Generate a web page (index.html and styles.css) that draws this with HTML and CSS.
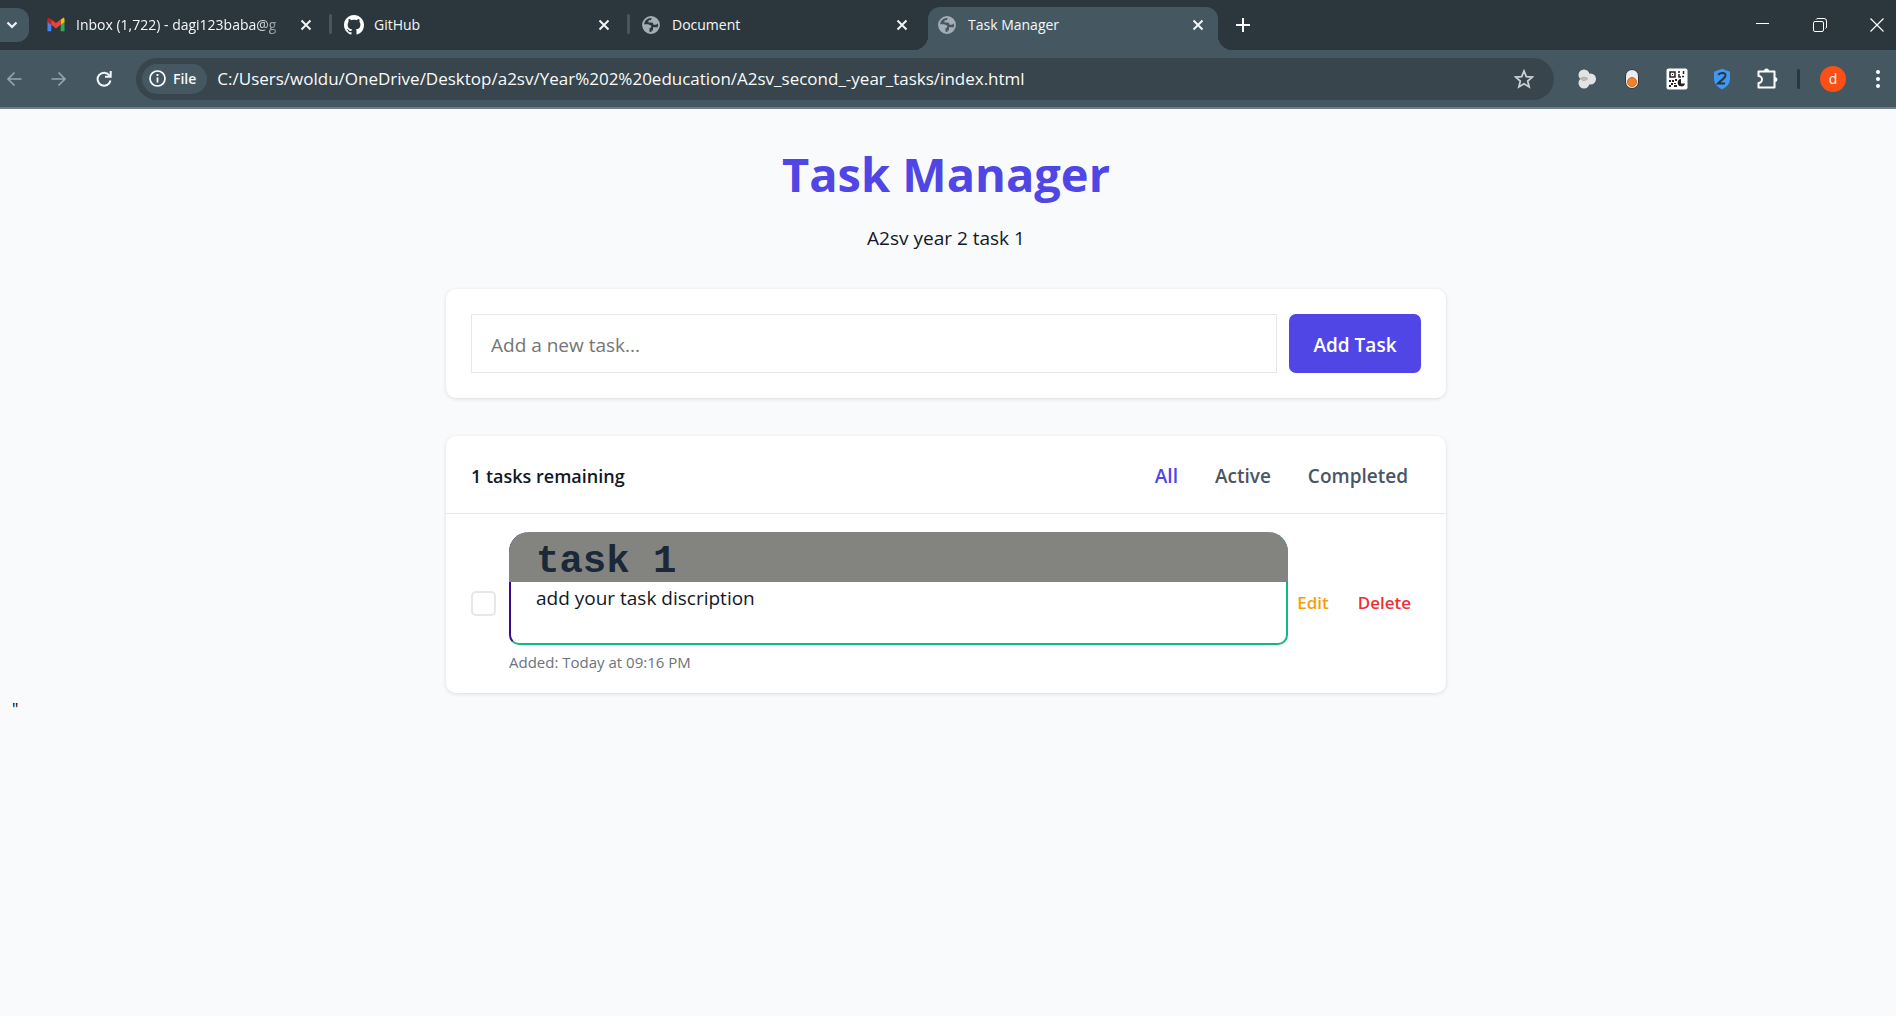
FILE: index.html
```html
<!DOCTYPE html>
<html lang="en">
<head>
<meta charset="utf-8">
<title>Task Manager</title>
<link rel="stylesheet" href="styles.css">
</head>
<body>
<svg class="defs" width="0" height="0" aria-hidden="true">
  <symbol id="close" viewBox="0 0 12 12"><path d="M1.5 1.5l9 9m0-9l-9 9" fill="none" stroke="currentColor" stroke-width="1.9"/></symbol>
  <symbol id="globe" viewBox="0 0 18 18"><circle cx="9" cy="9" r="8" fill="none" stroke="#a3adb5" stroke-width="1.800"/><path d="M9 1C10 2 10 3 8.500 4.200H6.500v2.300H9.500c1.500 0 2 1 2 2.300h2.500L17 6.500C16 3 13 1 9 1zM1 8.300h5l2.500 1c1.500.7 1 2.700-1 2.700v4.700C3.500 17 0 13 1 8.300zM11 11.200h3.500l2 .5c-1 2.500-3 4.500-5.500 5.300H9.500v-2.500h1.500z" fill="#a3adb5"/></symbol>
</svg>
<header class="browser">
  <div class="tabstrip">
    <button class="tab-search" aria-label="Search tabs"><svg width="12" height="8" viewBox="0 0 12 8"><path d="M1.500 1.500L6 6l4.500-4.500" fill="none" stroke="#eef2f4" stroke-width="2.200"/></svg></button>
    <div class="tabs">
      <div class="tab divided">
        <svg class="favicon" viewBox="0 0 20 20"><path d="M1.500 6v10.200h3.800V8z" fill="#4285f4"/><path d="M18.500 6v10.200h-3.800V8z" fill="#34a853"/><path d="M14.700 4.700L17 3c1-.5 1.500.3 1.500 1.500V7l-3.800 2.800z" fill="#fbbc04"/><path d="M1.500 7V4.500c0-1.500 1-2 2-1.300l1.800 1.300v5.300z" fill="#c5221f"/><path d="M5.300 4.500L10 8l4.700-3.500v5.300L10 13.400 5.300 9.800z" fill="#ea4335"/></svg>
        <span class="tab-title fade">Inbox (1,722) - dagi123baba@g</span>
        <button class="tab-close" aria-label="Close tab"><svg width="12" height="12"><use href="#close"/></svg></button>
      </div>
      <div class="tab divided">
        <svg class="favicon" viewBox="0 0 16 16"><path fill="#fff" d="M8 0C3.580 0 0 3.580 0 8c0 3.540 2.290 6.530 5.470 7.590.4.070.55-.17.55-.38 0-.19-.01-.82-.01-1.490-2.010.37-2.530-.49-2.690-.94-.09-.23-.48-.94-.82-1.130-.28-.15-.68-.52-.01-.53.63-.01 1.080.58 1.230.82.72 1.210 1.870.87 2.330.66.070-.52.28-.87.51-1.070-1.780-.2-3.640-.89-3.640-3.950 0-.87.31-1.590.82-2.150-.08-.2-.36-1.020.08-2.120 0 0 .67-.21 2.200.82.640-.18 1.320-.27 2-.27s1.360.09 2 .27c1.530-1.040 2.200-.82 2.200-.82.44 1.100.16 1.920.08 2.120.51.560.82 1.270.82 2.150 0 3.070-1.870 3.750-3.650 3.950.29.25.54.73.54 1.480 0 1.070-.01 1.930-.01 2.200 0 .21.15.46.55.38A8.010 8.010 0 0 0 16 8c0-4.420-3.580-8-8-8z"/></svg>
        <span class="tab-title">GitHub</span>
        <button class="tab-close" aria-label="Close tab"><svg width="12" height="12"><use href="#close"/></svg></button>
      </div>
      <div class="tab">
        <svg class="favicon globe"><use href="#globe"/></svg>
        <span class="tab-title">Document</span>
        <button class="tab-close" aria-label="Close tab"><svg width="12" height="12"><use href="#close"/></svg></button>
      </div>
      <div class="tab active">
        <svg class="favicon globe"><use href="#globe"/></svg>
        <span class="tab-title">Task Manager</span>
        <button class="tab-close" aria-label="Close tab"><svg width="12" height="12"><use href="#close"/></svg></button>
      </div>
      <button class="new-tab" aria-label="New tab"><svg width="14" height="14"><path d="M7 0v14M0 7h14" stroke="#fff" stroke-width="2"/></svg></button>
    </div>
    <div class="window-controls">
      <button aria-label="Minimize"><svg width="14" height="14"><path d="M0 5.500h13" stroke="#fff"/></svg></button>
      <button aria-label="Restore"><svg width="14" height="14" fill="none" stroke="#fff"><rect x=".5" y="3.500" width="10" height="10" rx="1.500"/><path d="M3 1.500Q3.500.5 5 .5h6q2.500 0 2.500 2.500v6q0 1-1 1.500"/></svg></button>
      <button aria-label="Close"><svg width="14" height="14"><path d="M.5.5l13 13m0-13l-13 13" stroke="#fff" stroke-width="1.200"/></svg></button>
    </div>
  </div>
  <div class="toolbar">
    <div class="nav">
      <button class="dim" aria-label="Back"><svg width="16" height="16"><path d="M15.500 8H1.500m7-6.500L2 8l6.500 6.500" fill="none" stroke="currentColor" stroke-width="1.700"/></svg></button>
      <button class="dim" aria-label="Forward"><svg width="16" height="16"><path d="M.5 8h14m-7-6.500L14 8l-6.500 6.500" fill="none" stroke="currentColor" stroke-width="1.700"/></svg></button>
      <button aria-label="Reload"><svg width="16" height="16"><path d="M13.500 4.500A6.500 6.500 0 1 0 14.500 9.500M14.700 0v5.800H9" fill="none" stroke="currentColor" stroke-width="2"/></svg></button>
    </div>
    <div class="omnibox">
      <button class="chip"><svg width="17" height="17"><circle cx="8.500" cy="8.500" r="7.500" fill="none" stroke="#fff" stroke-width="1.700"/><path d="M8.500 7.500v5M8.500 4v2" stroke="#fff" stroke-width="1.800"/></svg>File</button>
      <input class="url" aria-label="Address" value="C:/Users/woldu/OneDrive/Desktop/a2sv/Year%202%20education/A2sv_second_-year_tasks/index.html">
      <button class="star" aria-label="Bookmark"><svg width="20" height="20" viewBox="0 0 20 20"><path d="M10 2l2.300 5.600 6 .5-4.600 3.900 1.400 5.900L10 14.700l-5.100 3.200L6.300 12 1.700 8.100l6-.5z" fill="none" stroke="#c9d0d4" stroke-width="1.800"/></svg></button>
    </div>
    <div class="extensions">
      <button aria-label="Circles extension"><svg width="22" height="22"><g fill="#e3e3e3"><circle cx="8" cy="7" r="5.500"/><circle cx="8" cy="15" r="5.500"/><circle cx="14.500" cy="11" r="5.500"/></g><path d="M4 10.500q4-3 8 0-4 4-8 0" fill="#bbb" stroke="#b0b0b0"/></svg></button>
      <button aria-label="Toggle extension"><svg width="22" height="22"><rect x="4.500" y="1.500" width="13" height="19" rx="6.500" fill="#ececec" stroke="#30353a"/><circle cx="11" cy="14" r="4.500" fill="#f4812a" stroke="#d66616"/></svg></button>
      <button aria-label="QR code"><svg width="22" height="22"><rect x=".5" y=".5" width="21" height="21" rx="2" fill="#fff"/><path d="M4 4h5v5H4zM12 4h2M13 6v3h2M17.500 3v3M16 8.500h2" fill="none" stroke="#222" stroke-width="1.500"/><path d="M3 12h2v2H3zM6 12h2v2H6zM9 11h2v2H9zM5 15h2v2H5zM3 17h2v2H3zM8 15h2v1H8zM8 17h3v2H8zM6 6h1v1H6z" fill="#222"/><path d="M15 11v4.500h4A3.700 3.700 0 1 1 15 11z" fill="#222"/></svg></button>
      <button aria-label="Shield extension"><svg width="22" height="22"><path d="M11 .7l8 3v7c0 5-3.500 8.500-8 10.500-4.500-2-8-5.500-8-10.500v-7z" fill="#3e98f4"/><path d="M7.500 7C8.500 4.200 15 4 14.500 7.500c-.5 3-5 5-7.500 8h7" fill="none" stroke="#26383f" stroke-width="2"/></svg></button>
      <button aria-label="Extensions"><svg width="22" height="22"><path d="M2.500 3.500h16v16h-16v-4.500a3.500 3.500 0 0 0 0-7z" fill="none" stroke="#fff" stroke-width="2" stroke-linejoin="round"/><path d="M8 3a2.500 2.500 0 0 1 5 0zM19 9a2.500 2.500 0 0 1 0 5z" fill="#fff"/></svg></button>
    </div>
    <span class="rule"></span>
    <button class="avatar" aria-label="Profile">d</button>
    <button class="menu" aria-label="Menu"><svg width="6" height="20" fill="#fff"><circle cx="3" cy="3" r="2"/><circle cx="3" cy="10" r="2"/><circle cx="3" cy="17" r="2"/></svg></button>
  </div>
</header>
<main class="page">
  <div class="container">
    <h1>Task Manager</h1>
    <p class="subtitle">A2sv year 2 task 1</p>
    <form class="card add-form">
      <input class="new-task" type="text" placeholder="Add a new task..." aria-label="New task">
      <button class="add" type="button">Add Task</button>
    </form>
    <section class="card list">
      <div class="list-head">
        <span class="count">1 tasks remaining</span>
        <div class="filters">
          <button class="selected">All</button>
          <button>Active</button>
          <button>Completed</button>
        </div>
      </div>
      <div class="task">
        <input class="check" type="checkbox" aria-label="Mark task 1 as completed">
        <div class="task-body">
          <div class="note">
            <h2>task 1</h2>
            <p>add your task discription</p>
          </div>
          <p class="added">Added: Today at 09:16 PM</p>
        </div>
        <div class="actions">
          <button class="edit">Edit</button>
          <button class="delete">Delete</button>
        </div>
      </div>
    </section>
  </div>
  <p class="stray">"</p>
</main>
</body>
</html>
```
FILE: styles.css
```css
* { box-sizing: border-box; }
body { margin: 0; background: #f9fafc; color: #111827; font-family: "Open Sans", "Noto Sans", sans-serif; }
h1, h2, p { margin: 0; }
button { border: 0; padding: 0; background: none; font: inherit; color: inherit; cursor: pointer; }
button svg { display: block; }
.defs { position: absolute; }

.browser { background: #455861; color: #f5f7f8; border-bottom: 2px solid #6c7f89; }
.tabstrip { display: flex; height: 50px; background: #2c373d; }
.tab-search { display: grid; place-items: center; width: 29px; height: 34px; margin: 8px 5px 0 0; padding-right: 6px; background: #455861; border-radius: 0 12px 12px 0; flex: none; }
.tabs { display: flex; flex: 1; min-width: 0; }
.tab { position: relative; display: flex; align-items: center; flex: 0 1 298px; min-width: 0; height: 36px; margin-top: 7px; padding: 0 20px 0 12px; }
.divided::after { content: ""; position: absolute; right: 0; top: 7px; width: 3px; height: 20px; border-radius: 2px; background: #455861; }
.favicon { width: 20px; height: 20px; flex: none; }
.globe { width: 18px; height: 18px; margin-right: 2px; }
.tab-title { flex: 1; min-width: 0; margin: 0 14px 0 10px; font-size: 14px; line-height: 22px; white-space: nowrap; overflow: hidden; }
.fade { -webkit-mask-image: linear-gradient(to right, #000 180px, transparent 216px); mask-image: linear-gradient(to right, #000 180px, transparent 216px); }
.tab-close { flex: none; }
.active { flex-basis: 290px; height: 43px; padding: 0 14px 7px 10px; background: #455861; border-radius: 12px 12px 0 0; }
.active::before, .active::after { content: ""; position: absolute; bottom: 0; width: 14px; height: 14px; }
.active::before { right: 100%; background: radial-gradient(circle at 0 0, transparent 14px, #455861 14px); }
.active::after { left: 100%; background: radial-gradient(circle at 100% 0, transparent 14px, #455861 14px); }
.new-tab { height: 36px; margin: 7px 0 0 18px; }
.window-controls { display: flex; align-items: center; gap: 43px; padding: 0 12px 0 20px; }

.toolbar { display: flex; align-items: center; height: 57px; padding: 0 15px 0 6px; }
.nav { display: flex; gap: 29px; margin-right: 24px; }
.dim { color: #98a4ab; }
.omnibox { display: flex; align-items: center; flex: 1; min-width: 0; height: 42px; padding: 0 20px 0 6px; border-radius: 21px; background: #38454c; }
.chip { display: flex; align-items: center; gap: 7px; height: 30px; padding: 0 11px 0 7px; border-radius: 15px; background: #455861; font-size: 14px; font-weight: 600; }
.url { flex: 1; min-width: 0; margin-left: 10px; padding: 0; border: 0; outline: 0; background: none; color: #f8fafb; font: 17px/24px "Open Sans", "Noto Sans", sans-serif; }
.extensions { display: flex; gap: 23px; margin-left: 22px; }
.rule { width: 3px; height: 20px; margin: 0 20px 0 19px; border-radius: 2px; background: #2c373d; }
.avatar { width: 26px; height: 26px; border-radius: 50%; background: #fa5016; font-size: 14px; line-height: 24px; }
.menu { margin-left: 29px; }

.page { padding: 35px 14px 0 10px; }
.container { max-width: 1000px; margin: 0 auto; }
h1 { text-align: center; color: #4f46e5; font-size: 47px; line-height: 60px; font-weight: 700; }
.subtitle { margin-top: 19px; text-align: center; font-size: 19px; line-height: 30px; }
.card { margin-top: 38px; background: #fff; border-radius: 10px; box-shadow: 0 1px 4px rgba(0, 0, 0, .12); }
.add-form { display: flex; gap: 12px; margin-top: 36px; padding: 25px; }
.new-task { flex: 1; min-width: 0; height: 59px; padding: 2px 19px 0; border: 1px solid #e5e7eb; font: 19px/30px "Open Sans", "Noto Sans", sans-serif; }
.new-task::placeholder { color: #757575; }
.add { width: 132px; padding-top: 2px; border-radius: 7px; background: #4f46e5; color: #fff; font-size: 19px; font-weight: 600; }
.list-head { display: flex; align-items: center; justify-content: space-between; height: 78px; padding: 2px 38px 0 25px; border-bottom: 1px solid #e5e7eb; line-height: 30px; }
.count { font-size: 18px; font-weight: 600; }
.filters { display: flex; gap: 37px; color: #4b5563; font-size: 19px; font-weight: 600; }
.filters .selected { color: #4f46e5; }
.task { display: flex; align-items: center; padding: 18px 35px 19px 25px; }
.check { appearance: none; flex: none; width: 25px; height: 25px; margin: 0 13px 0 0; border: 2px solid #e5e7eb; border-radius: 5px; background: #fff; }
.task-body { flex: 1; min-width: 0; }
.note { height: 113px; border: 2px solid #10b981; border-top: 0; border-left-color: #3b0a8f; border-radius: 20px 20px 10px 10px; }
.note h2 { height: 50px; margin: 0 -2px; padding-left: 27px; border-radius: 20px 20px 0 0; background: #838380; color: #1a2838; font: 700 39px/60px "Liberation Mono", monospace; }
.note p { padding-left: 25px; font-size: 19px; line-height: 32px; }
.added { margin-top: 5px; color: #6b7280; font-size: 15px; line-height: 24px; }
.actions { display: flex; gap: 29px; margin-left: 9px; font-size: 17px; line-height: 24px; font-weight: 600; }
.edit { color: #f59e0b; }
.delete { color: #ef2f35; }
.stray { padding: 4px 2px; color: #000; font-size: 16px; line-height: 24px; }
```
